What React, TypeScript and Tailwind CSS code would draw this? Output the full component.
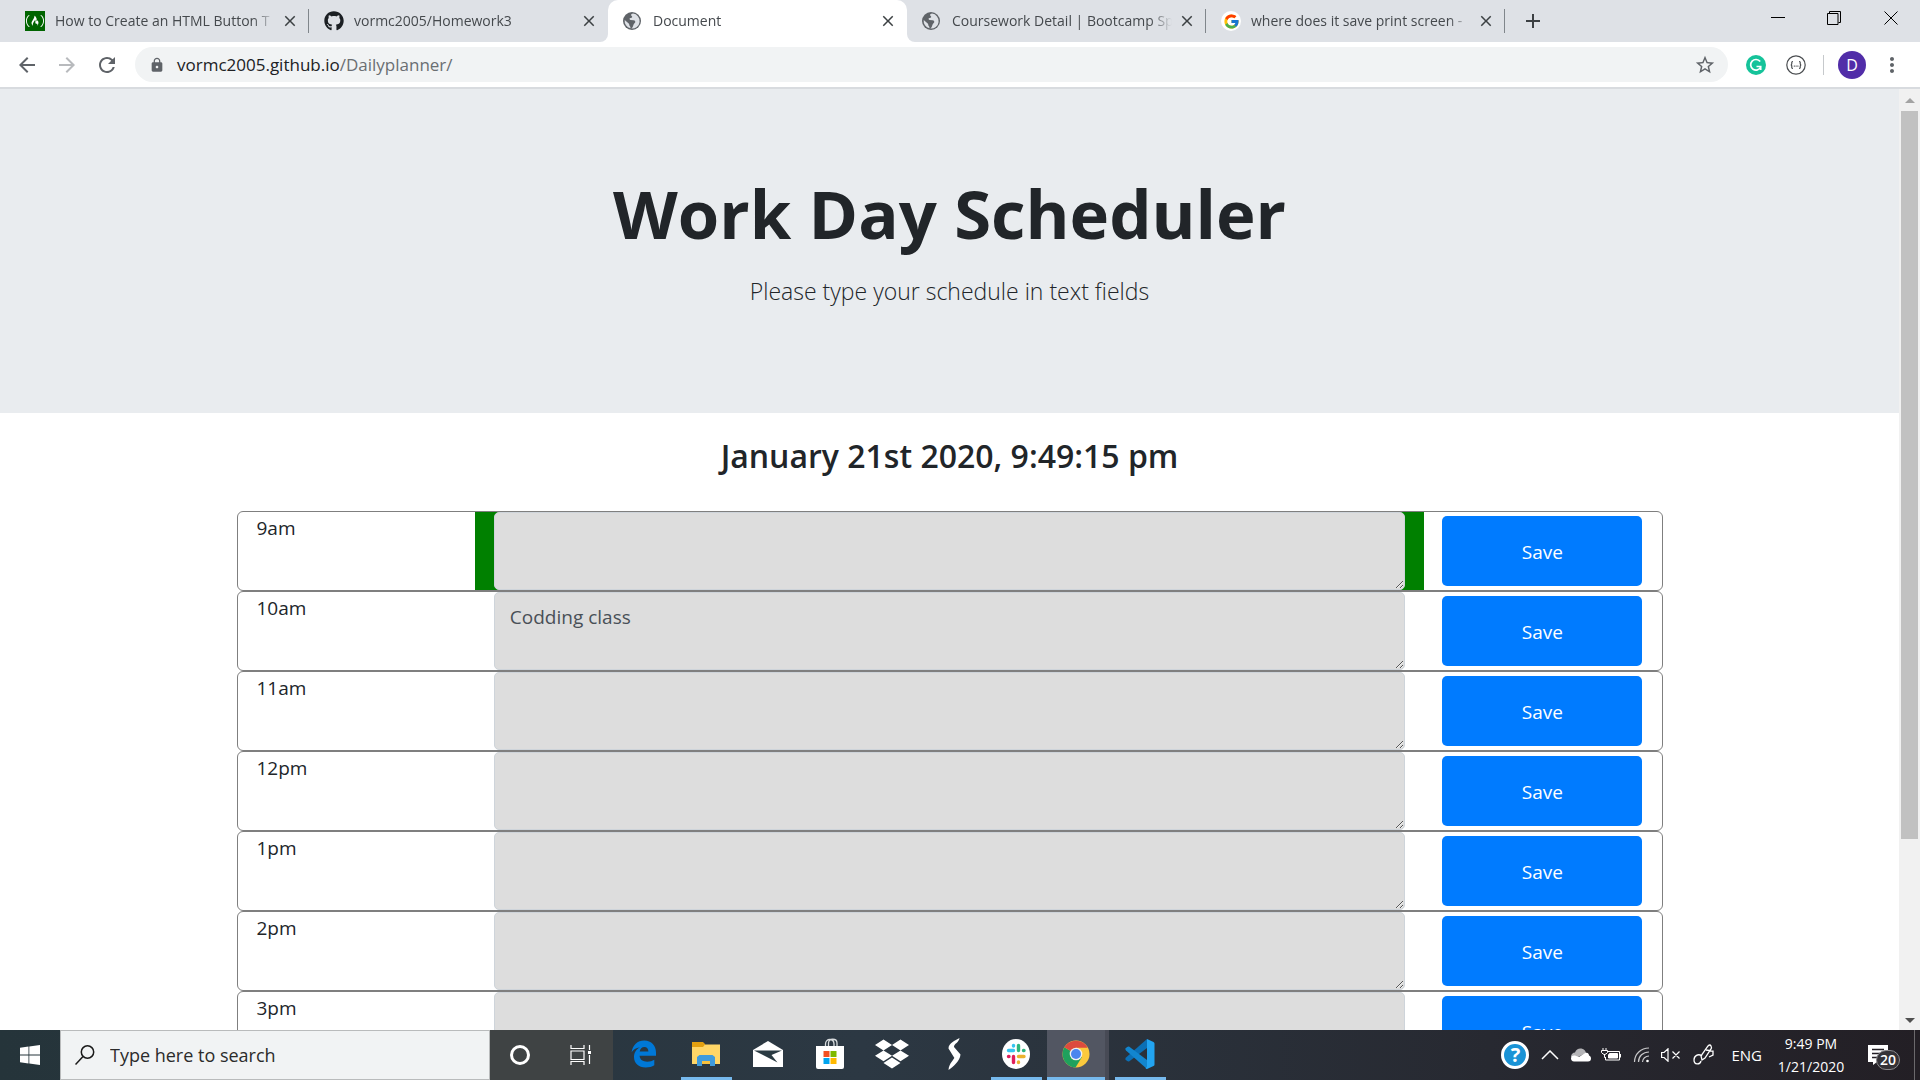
import React from "react";
import { SiFreecodecamp } from "react-icons/si";
import {
  MdArrowBack,
  MdArrowForward,
  MdRefresh,
  MdLock,
  MdStarBorder,
  MdMoreVert,
  MdAdd,
  MdClose,
} from "react-icons/md";
import { FaGithub, FaDropbox } from "react-icons/fa";
import { FcGoogle } from "react-icons/fc";

function FreeCodeIcon() {
  return (
    <span className="flex size-5 items-center justify-center bg-[#006400]">
      <SiFreecodecamp className="size-[18px] text-white" />
    </span>
  );
}

function GlobeIcon() {
  return (
    <svg viewBox="0 0 18 18" className="size-[18px]">
      <circle cx="9" cy="9" r="9" fill="#5f6368" />
      <path d="M10 1.6c-2 .3-2.6 1.6-1.3 2.5 1.1.8.3 1.9-1 1.9-1.6 0-1.4 1.6-.2 1.9l3 .3c1.7.2 2.4 1.6 1.2 2.8-1.1 1-1.2 2.2-1.8 3.4-.3.8-1 1.6-1.6 2.1A7.4 7.4 0 0 0 10 1.6zM1.7 8.1l4 3.3c.8.7.4 1.3.7 2 .4.8 1.2 1.2 1.1 2.9A7.4 7.4 0 0 1 1.7 8.1z" fill="#dee1e6" />
    </svg>
  );
}

function GoogleIcon() {
  return (
    <span className="flex size-5 items-center justify-center rounded-full bg-white">
      <FcGoogle className="size-[17px]" />
    </span>
  );
}

type Tab = { title: string; icon: React.ReactNode; active?: boolean; divider?: boolean };

const tabs: Tab[] = [
  { title: "How to Create an HTML Button T", icon: <FreeCodeIcon />, divider: true },
  { title: "vormc2005/Homework3", icon: <FaGithub className="size-5 text-[#1b1f23]" /> },
  { title: "Document", icon: <GlobeIcon />, active: true },
  { title: "Coursework Detail | Bootcamp Sp", icon: <GlobeIcon />, divider: true },
  { title: "where does it save print screen -", icon: <GoogleIcon />, divider: true },
];

function TabItem({ tab }: { tab: Tab }) {
  return (
    <div
      className={
        tab.active
          ? "relative flex h-[42px] w-[299px] min-w-0 items-center rounded-t-[10px] bg-white pr-2.5 pl-[15px]"
          : "relative flex h-[42px] w-[299px] min-w-0 items-center pr-2.5 pl-[15px]"
      }
    >
      {tab.active && (
        <>
          <span className="absolute bottom-0 -left-2 size-2 bg-white">
            <span className="block size-2 rounded-br-lg bg-[#dee1e6]" />
          </span>
          <span className="absolute -right-2 bottom-0 size-2 bg-white">
            <span className="block size-2 rounded-bl-lg bg-[#dee1e6]" />
          </span>
        </>
      )}
      <span className="flex w-5 shrink-0 items-center">{tab.icon}</span>
      <span className="ml-2.5 min-w-0 flex-1 mask-r-from-90% text-sm whitespace-nowrap text-[#45494d]">
        {tab.title}
      </span>
      <button aria-label="Close tab" className="ml-1.5 flex size-[18px] items-center justify-center text-[#3c4043]">
        <MdClose className="size-[18px]" />
      </button>
      {tab.divider && <span className="absolute top-[9px] right-0 h-6 w-px bg-[#80868b]" />}
    </div>
  );
}

function TabStrip() {
  return (
    <div className="flex h-[42px] bg-[#dee1e6] pl-[10px]">
      <div className="flex min-w-0">
        {tabs.map((t) => (
          <TabItem key={t.title} tab={t} />
        ))}
      </div>
      <button aria-label="New tab" className="ml-4 flex w-6 items-center justify-center text-[#3c4043]">
        <MdAdd className="size-6" />
      </button>
      <div className="ml-auto flex h-9 text-black">
        <button aria-label="Minimize" className="flex w-14 items-center justify-center">
          <svg viewBox="0 0 14 14" className="size-3.5"><path d="M0 6.500h14" stroke="currentColor" fill="none" /></svg>
        </button>
        <button aria-label="Restore" className="flex w-14 items-center justify-center">
          <svg viewBox="0 0 14 14" className="size-3.5" fill="none" stroke="currentColor">
            <path d="M.5 2.500h10.500v11H.5zM2.500 2.500v-2h11v11h-2" />
          </svg>
        </button>
        <button aria-label="Close" className="flex w-[58px] items-center justify-center">
          <svg viewBox="0 0 14 14" className="size-3.5"><path d="M.5.5l13 13M13.500.5l-13 13" stroke="currentColor" fill="none" /></svg>
        </button>
      </div>
    </div>
  );
}

function Toolbar() {
  return (
    <div className="flex h-[47px] shrink-0 items-center border-b-2 border-[#d8dbdf] bg-white pr-4 pl-[15px] text-[#5f6368]">
      <button aria-label="Back" className="mr-4"><MdArrowBack className="size-6" /></button>
      <button aria-label="Forward" className="mr-4 text-[#b8babd]"><MdArrowForward className="size-6" /></button>
      <button aria-label="Reload" className="mr-4"><MdRefresh className="size-6" /></button>
      <div className="flex h-[35px] min-w-0 flex-1 items-center rounded-full bg-[#f1f3f4] pr-3 pl-3.5">
        <MdLock className="size-4" />
        <div className="ml-3 flex-1 text-[17px] text-[#6a6e72]">
          <span className="text-[#202124]">vormc2005.github.io</span>/Dailyplanner/
        </div>
        <button aria-label="Bookmark"><MdStarBorder className="size-[22px]" /></button>
      </div>
      <button aria-label="Grammarly" className="ml-[18px] flex size-5 items-center justify-center rounded-full bg-[#15c39a] text-white">
        <svg viewBox="0 0 20 20" className="size-5" fill="none" stroke="currentColor" strokeWidth="1.700">
          <path d="M14.200 6.600A5.300 5.300 0 1 0 14.800 12M10.500 11.500h4.200v3.500" />
        </svg>
      </button>
      <button aria-label="JSON viewer" className="ml-5 flex size-5 items-center justify-center">
        <svg viewBox="0 0 20 20" className="size-5" fill="none" stroke="#4a4d50" strokeWidth="1.200">
          <circle cx="10" cy="10" r="9.200" />
          <path d="M7 6.500c-1.500 0-1.200 1-1.200 2 0 .9-.3 1.500-1.100 1.500.8 0 1.100.6 1.100 1.500 0 1-.3 2 1.200 2M13 6.500c1.500 0 1.200 1 1.200 2 0 .9.3 1.500 1.100 1.500-.8 0-1.100.6-1.100 1.500 0 1 .3 2-1.200 2" />
          <path d="M7.800 11.200h4.600" strokeDasharray="1 .8" />
        </svg>
      </button>
      <span className="ml-[17px] h-5 w-px bg-[#c6c9cc]" />
      <button aria-label="Profile" className="ml-3.5 flex size-7 items-center justify-center rounded-full bg-[#512da8] text-base text-white">
        D
      </button>
      <button aria-label="Menu" className="ml-3.5"><MdMoreVert className="size-6" /></button>
    </div>
  );
}

const hours = [
  { time: "9am", text: "", now: true },
  { time: "10am", text: "Codding class" },
  { time: "11am", text: "" },
  { time: "12pm", text: "" },
  { time: "1pm", text: "" },
  { time: "2pm", text: "" },
  { time: "3pm", text: "" },
];

function HourRow({ time, text, now }: { time: string; text: string; now?: boolean }) {
  return (
    <li className="flex h-20 rounded-md border border-[#7f7f7f]">
      <label htmlFor={time} className="w-1/6 pt-0.5 pl-[19px] text-[19px] leading-7">
        {time}
      </label>
      <div className={now ? "flex w-2/3 bg-[#008000] px-[19px]" : "flex w-2/3 px-[19px]"}>
        <textarea
          id={time}
          defaultValue={text}
          className="h-full w-full rounded-[5px] border border-[#ced4da] bg-[#dddddd] px-[15px] py-2.5 text-[19px] leading-7 text-[#495057]"
        />
      </div>
      <div className="flex w-1/6 py-1 pr-[19px] pl-[18px]">
        <button className="h-[70px] flex-1 rounded-[5px] bg-[#007bff] pt-0.5 text-[19px] text-white">Save</button>
      </div>
    </li>
  );
}

function Scrollbar() {
  return (
    <div className="flex w-[21px] shrink-0 flex-col items-center bg-[#f1f1f1]">
      <svg viewBox="0 0 20 22" className="h-[22px] w-5"><path d="M5 14l5-5 5 5z" fill="#a3a3a3" /></svg>
      <div className="w-[17px] flex-[728] bg-[#c1c1c1]" />
      <div className="flex-[171]" />
      <svg viewBox="0 0 20 20" className="size-5"><path d="M5 8h10l-5 5z" fill="#505050" /></svg>
    </div>
  );
}

function EdgeIcon() {
  return (
    <svg viewBox="0 0 26 28" className="h-7 w-[26px]" fill="#0078d7">
      <path d="M.6 12.300C1.600 5.200 6.400.5 13.300.5c7.200 0 11.700 5 11.700 12v3.300H8.600c.2 4 3.400 5.900 7.600 5.900 2.800 0 5.100-.7 7.100-1.900v5.500c-2.300 1.400-5.300 2.200-8.600 2.200C7.500 27.500 3 23.300 3 17c0-4.300 2.300-7.800 6-9.700C4.800 7.900 2.200 9.800.6 12.300zM8.700 11.600h8.700c0-2.700-1.500-4.600-4-4.600-2.600 0-4.300 1.900-4.700 4.600z" />
    </svg>
  );
}

function FolderIcon() {
  return (
    <svg viewBox="0 0 28 24" className="h-6 w-7">
      <path d="M0 0h11l2 2v4H0z" fill="#e3a010" />
      <path d="M0 5h11l2-2.500h15V22H0z" fill="#ffd667" />
      <path d="M5 24V15l2.500-2h13l2.500 2v9h-5v-5h-8v5z" fill="#3f9bdc" />
      <path d="M10 19h8v3h-8z" fill="#f7c13e" />
    </svg>
  );
}

function MailIcon() {
  return (
    <svg viewBox="0 0 30 26" className="h-[26px] w-[30px]">
      <path d="M0 9L15 0l15 9v17H0z" fill="#fff" />
      <path d="M1 9.500h28L18.500 14l6 7.500z" fill="#2a3a42" />
    </svg>
  );
}

function StoreIcon() {
  return (
    <svg viewBox="0 0 30 32" className="h-8 w-[30px]">
      <path d="M10.500 9V6c0-6 8.500-6 8.500 0v3M13.500 9V5c0-5 8.500-5 8.500 0v4" fill="none" stroke="#d8dcde" strokeWidth="1.300" />
      <path d="M1 8h28v21q0 2-2 2H3q-2 0-2-2z" fill="#fff" />
      <path d="M8.500 13h6v6h-6z" fill="#f25022" />
      <path d="M15.500 13h6v6h-6z" fill="#7fba00" />
      <path d="M8.500 20h6v6h-6z" fill="#00a4ef" />
      <path d="M15.500 20h6v6h-6z" fill="#ffb900" />
    </svg>
  );
}

function RibbonIcon() {
  return (
    <svg viewBox="0 0 14 34" className="h-[34px] w-3.5" fill="#fff">
      <path d="M12.500 1C8 3.500 1.500 6 1.500 11.500L8 22l5.500-4.500L7 10c0-3.500 5-4.500 5.500-9zM1.500 33C6 30 13 24 13.500 17.500L8 19.500C7 23 2 26 1.500 33z" />
    </svg>
  );
}

function SlackIcon() {
  return (
    <svg viewBox="0 0 28 30" className="h-[30px] w-7">
      <ellipse cx="14" cy="15" rx="14" ry="15" fill="#fff" />
      <g strokeLinecap="round" strokeWidth="3.400">
        <path d="M11.500 6.500v.5M6.500 11.500h5" stroke="#36c5f0" />
        <path d="M16.500 6.500v5M22 11.500h-.5" stroke="#2eb67d" />
        <path d="M16.500 17.500H22M16.500 23v.5" stroke="#ecb22e" />
        <path d="M11.500 17.500v6M6.500 17.500h.5" stroke="#e01e5a" />
      </g>
    </svg>
  );
}

function ChromeIcon() {
  return (
    <svg viewBox="0 0 28 28" className="size-7">
      <circle cx="14" cy="14" r="13.500" fill="#fbc93d" />
      <path d="M14 14L2.300 7.250A13.500 13.500 0 0 0 13.500 27.500L19.800 17.300z" fill="#1fa15d" />
      <path d="M14 14L2.300 7.250A13.500 13.500 0 0 1 25.700 7.700H14z" fill="#dc4b3e" />
      <circle cx="14" cy="14" r="6.300" fill="#f1f1f1" />
      <circle cx="14" cy="14" r="5" fill="#4a86ee" />
    </svg>
  );
}

function CodeIcon() {
  return (
    <svg viewBox="0 0 30 30" className="size-[30px]">
      <path d="M22 0v9L4 22.500Q2.500 23 .5 20.500q-.5-1 .5-2z" fill="#0b6fb5" />
      <path d="M22 30v-9L4 7.500Q2.500 7 .5 9.500q-.5 1 .5 2z" fill="#1286cf" />
      <path d="M22 0l6.500 3q1 .5 1 1.500v21q0 1-1 1.500L22 30q-1 0-1.500-1l1.500-1z" fill="#22a4f1" />
    </svg>
  );
}

const apps: { name: string; icon: React.ReactNode; open?: boolean; active?: boolean }[] = [
  { name: "Microsoft Edge", icon: <EdgeIcon /> },
  { name: "File Explorer", icon: <FolderIcon />, open: true },
  { name: "Mail", icon: <MailIcon /> },
  { name: "Microsoft Store", icon: <StoreIcon /> },
  { name: "Dropbox", icon: <FaDropbox className="size-[34px] text-white" /> },
  { name: "Stylus app", icon: <RibbonIcon /> },
  { name: "Slack", icon: <SlackIcon />, open: true },
  { name: "Chrome", icon: <ChromeIcon />, open: true, active: true },
  { name: "Visual Studio Code", icon: <CodeIcon />, open: true },
];

function Taskbar() {
  return (
    <footer className="flex h-[50px] shrink-0 bg-linear-to-r from-[#25343a] via-[#2c3843] via-45% to-[#231f25] text-white">
      <button aria-label="Start" className="flex w-[60px] shrink-0 items-center justify-center">
        <svg viewBox="0 0 20 20" className="size-5" fill="#fff">
          <path d="M0 2.800l8.500-1.200v8H0zM9.300 1.500L20 0v9.600H9.300zM0 10.400h8.500v8L0 17.200zM9.300 10.400H20V20L9.300 18.500z" />
        </svg>
      </button>
      <label className="flex w-[430px] shrink-0 items-center border border-[#b9bbbc] bg-[#f1f3f4] pl-3.5">
        <svg viewBox="0 0 20 20" className="size-5" fill="none" stroke="#1a1a1a" strokeWidth="1.500">
          <circle cx="12.500" cy="7" r="6.200" />
          <path d="M8 11.500L.5 19.500" />
        </svg>
        <input
          aria-label="Search"
          placeholder="Type here to search"
          className="ml-[15px] w-80 bg-transparent text-[18px] text-[#2b2b2b] outline-none placeholder:text-[#2b2b2b]"
        />
      </label>
      <div className="flex w-[123px] shrink-0 bg-[#3f4344]">
        <button aria-label="Cortana" className="flex w-[60px] items-center justify-center">
          <span className="size-5 rounded-full border-[3px] border-white" />
        </button>
        <button aria-label="Task View" className="flex w-[62px] items-center justify-center">
          <svg viewBox="0 0 22 20" className="h-5 w-[22px]" fill="none" stroke="#fff" strokeWidth="1.200">
            <path d="M1 0v3.500h13V0M1 6h13v8.500H1zM1 20v-3.500h13V20M19.500 0v5M19.500 10v9" />
            <path d="M18 6h3v3h-3z" fill="#fff" stroke="none" />
          </svg>
        </button>
      </div>
      <div className="flex">
        {apps.map((a) => (
          <button
            key={a.name}
            aria-label={a.name}
            className={
              a.active
                ? "flex w-[62px] flex-col items-center border-r-4 border-[#474a55] bg-[#525662]"
                : "flex w-[62px] flex-col items-center"
            }
          >
            <span className="flex flex-1 items-center">{a.icon}</span>
            <span className={a.open ? (a.active ? "h-[3px] w-full bg-[#76b9ed]" : "h-[3px] w-[51px] bg-[#76b9ed]") : "h-[3px]"} />
          </button>
        ))}
      </div>
      <div className="ml-auto flex items-center">
        <button aria-label="Help" className="flex size-7 items-center justify-center rounded-full border-[3px] border-white bg-[#1a93d6] text-xl font-bold">
          ?
        </button>
        <svg viewBox="0 0 18 10" className="ml-3 h-2.5 w-[18px]" fill="none" stroke="#fff" strokeWidth="1.500"><path d="M1 9l8-8 8 8" /></svg>
        <svg viewBox="0 0 20 14" className="ml-3 h-3.5 w-5">
          <path d="M0 9C0 6 2 4.500 4 4.500 5 1 8 0 10.500 .5c3 .5 4 2.500 4.500 4.500L7 9z" fill="#b4b4b7" />
          <path d="M3 13.500C1 13.500 0 12 0 10.500 0 8 2 7 4 7.500l4 1.500 6-4c3-1 4 1 4 2.500 1.500.5 2 1.500 2 3 0 2-1 3-3 3z" fill="#fff" />
        </svg>
        <svg viewBox="0 0 20 14" className="ml-2.5 h-3.5 w-5" fill="none" stroke="#fff">
          <path d="M6.500 3.500h12v8.500H4.500V9M2 0v2M5 0v2" />
          <path d="M.5 2.500h6v2q-3 4-6 0z" />
          <path d="M3.500 6v3.500h1" />
          <path d="M8.500 5.500h8v4.500h-9V7z" fill="#fff" />
          <path d="M19.500 6v3.500" />
        </svg>
        <svg viewBox="0 0 18 16" className="ml-3 h-4 w-[18px]" fill="none" stroke="#c8c8ca" strokeWidth="1.200">
          <path d="M1.500 15C1.500 7 8 1 16 1M5.500 15C5.500 9 10 5 16 5M9.500 15c0-3.500 3-6 6.500-6" />
          <circle cx="14.500" cy="14" r="1.300" fill="#fff" stroke="none" />
        </svg>
        <svg viewBox="0 0 20 14" className="ml-2.5 h-3.5 w-5" fill="none" stroke="#fff" strokeWidth="1.200">
          <path d="M.6 4.500h2.500L7 .8v12.400L3.100 9.500H.6zM11.500 3.500l7 7M18.500 3.500l-7 7" />
        </svg>
        <svg viewBox="0 0 22 22" className="ml-3 size-[22px]" fill="none" stroke="#fff" strokeWidth="1.300">
          <path d="M9 16L8 12l7-10q2-2 3 0t0 3l-6 9zM13 6l7 1v4l-4 2M9 12c-4-3-8 0-8 4 0 5 6 5 7 1" />
        </svg>
        <span className="ml-4 text-[15px]">ENG</span>
        <div className="ml-3 w-[74px] text-center text-sm leading-[23px] whitespace-nowrap">
          <div>9:49 PM</div>
          <div>1/21/2020</div>
        </div>
        <button aria-label="Notifications" className="relative ml-5 h-[30px] w-8">
          <svg viewBox="0 0 20 20" className="size-5"><path d="M0 0h20v17H9l-4 3v-3H0z" fill="#fff" /><path d="M4 4.500h12M4 8.500h12M4 12.500h8" stroke="#231f25" strokeWidth="1.300" /></svg>
          <span className="absolute top-2.5 left-2 flex h-5 w-6 items-center justify-center rounded-full border border-[#8a898c] bg-[#343237] text-sm font-semibold">
            20
          </span>
        </button>
        <span className="ml-3.5 h-[50px] w-1.5 border-l border-[#6b696c]" />
      </div>
    </footer>
  );
}

export default function App() {
  return (
    <div className="flex h-screen flex-col overflow-hidden bg-white font-['Open_Sans',sans-serif] text-[#212529]">
      <header className="shrink-0">
        <TabStrip />
        <Toolbar />
      </header>
      <div className="flex min-h-0 flex-1">
        <main className="min-w-0 flex-1 overflow-hidden">
          <section className="bg-[#e9ecef] pt-[76px] pb-[104px] text-center">
            <h1 className="text-[67px] leading-[96px] font-bold">Work Day Scheduler</h1>
            <p className="mt-3 text-[23px] leading-9 font-light">Please type your schedule in text fields</p>
          </section>
          <h2 className="mt-[22px] text-center text-[32px] leading-[42px] font-semibold">January 21st 2020, 9:49:15 pm</h2>
          <ul className="mx-auto mt-[34px] max-w-[1426px]">
            {hours.map((h) => (
              <HourRow key={h.time} {...h} />
            ))}
          </ul>
        </main>
        <Scrollbar />
      </div>
      <Taskbar />
    </div>
  );
}
